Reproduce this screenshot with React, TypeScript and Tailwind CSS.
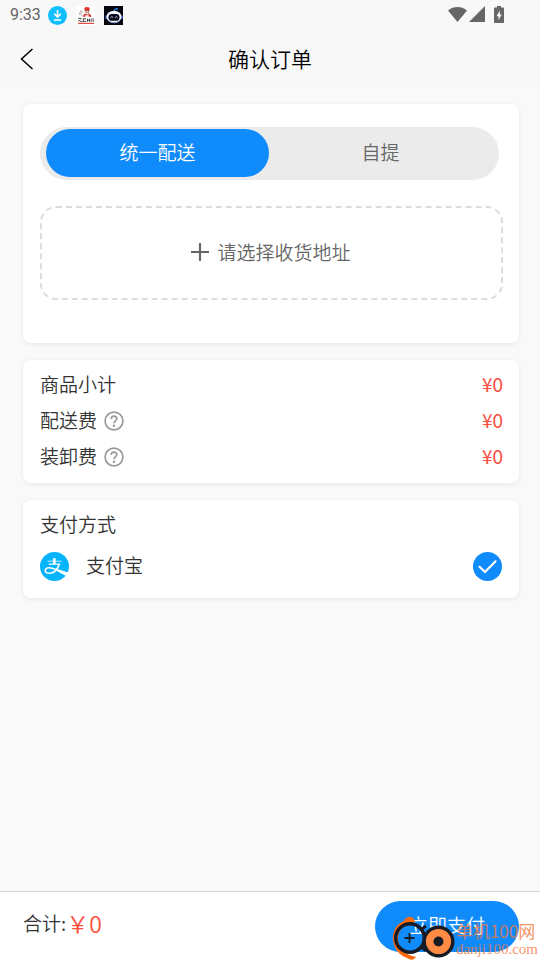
import React, { useState } from 'react';

const fees = [
  { label: '商品小计', amount: 0, help: false },
  { label: '配送费', amount: 0, help: true },
  { label: '装卸费', amount: 0, help: true },
];

const StatusBar: React.FC = () => (
  <div className="flex h-[30px] items-center justify-between pl-[10px] pr-[34px]">
    <div className="flex items-center">
      <span className="w-[38px] font-['Roboto',sans-serif] text-base leading-5 font-normal text-[#666]">9:33</span>
      {/* Download */}
      <svg className="h-[19px] w-[19px]" viewBox="0 0 19 19" fill="none">
        <circle cx="9.5" cy="9.5" r="9.5" fill="#10bfff" />
        <path d="M9.5 4v7M6.2 7.800l3.300 3.300 3.300-3.300M6 14h7" stroke="#fff" strokeWidth="1.6" />
      </svg>
      {/* Chef app */}
      <svg className="ml-[9px] h-[19px] w-[19px]" viewBox="0 0 19 19">
        <path d="M0 0h19v19H0z" fill="#fff" />
        <path d="M8.3 3.2c0-2 2.200-2.600 3.200-1.800 1.600-.4 2.700.7 2 2l-.6 1.200H9z" fill="#e22f26" />
        <path d="M8.800 4.500h4.600v3.200c-1 1.500-3.600 1.500-4.600 0z" fill="#f0c8ba" />
        <path d="M8.500 4.600h5" stroke="#a33" strokeWidth=".8" />
        <path d="M9.500 6.100h1M12 6.100h1" stroke="#444" strokeWidth=".8" />
        <path d="M7.500 8.800l2-1 1.700 1 1.800-1 2 1.200.3 1.800H6.800z" fill="#d9332c" />
        <path d="M4.200 5.500l1.600-1 .6 1.300-1.800 2.700 2 1.500M4.500 5l-1.300 4" stroke="#a08a85" strokeWidth=".7" fill="none" />
        <path d="M9.200 9.200h3.600v2H9.200z" fill="#fbeae6" />
        <path d="M2 13l1.800-.8 1.700.6M2.500 15.500l2-1.800M4 15.600h2.500M7 12.800h3M7 15.400h3M7.300 13v2.300M11.500 15.800v-3M13.500 12.800v3M11.500 14.200h2M15.200 15.800v-3.200M17.200 12.300v3.500" stroke="#333" strokeWidth=".9" fill="none" />
        <path d="M2 16.800h16v1.200H2z" fill="#e34a42" />
      </svg>
      {/* Robot app */}
      <svg className="ml-[9px] h-[19px] w-[19px]" viewBox="0 0 19 19" fill="none">
        <path d="M0 0h19v19H0z" fill="#05060d" />
        <path d="M10.400 5.200c-.1-1.600.6-2.300 2.300-2.400" stroke="#1687e8" strokeWidth="1.300" />
        <circle cx="13" cy="2.700" r="1" fill="#1687e8" />
        <path d="M2 9.500v3.500M18 9.500v3.500" stroke="#2459cf" strokeWidth="1.600" />
        <ellipse cx="10" cy="10.700" rx="7.600" ry="6" fill="#f4f7ff" />
        <path d="M4.500 15c3 2.300 8 2.300 11 0" stroke="#7e9be6" />
        <rect x="4.500" y="8" width="11" height="6.800" rx="3.400" fill="#080a18" />
        <path d="M6.900 12.200v-1.100c.3-1 1.500-1 1.800 0v1.100M11.400 12.200v-1.100c.3-1 1.500-1 1.800 0v1.100" stroke="#aab8d8" strokeWidth=".8" />
      </svg>
    </div>
    <svg className="h-[18px] w-[58px]" viewBox="0 0 58 18" fill="#666">
      <path d="M0 4.400C5.500-.2 13.500-.2 19 4.400L9.500 16z" />
      <path d="M37 0v16H21z" />
      <path d="M49 0h4v1.600h2.200c.5 0 .8.3.8.8v13.800c0 .5-.3.8-.8.8h-8.400c-.5 0-.8-.3-.8-.8V2.400c0-.5.3-.8.8-.8H49z" />
      <path d="M51.800 4.500L48.500 10.300h2v3.700l3.300-5.400h-2z" fill="#f8f8f8" />
    </svg>
  </div>
);

const HelpIcon: React.FC = () => (
  <svg className="h-5 w-5" viewBox="0 0 20 20" fill="none" stroke="#999">
    <circle cx="10" cy="10" r="8.900" strokeWidth="1.700" />
    <path d="M7.200 8c0-3.800 5.600-3.700 5.600-.4 0 2-2.700 2.300-2.700 4.600" strokeWidth="1.700" />
    <circle cx="10" cy="14.800" r="1.200" fill="#999" stroke="none" />
  </svg>
);

const AlipayIcon: React.FC = () => (
  <svg className="h-[29px] w-[29px]" viewBox="0 0 29 29" fill="none">
    <circle cx="14.500" cy="14.500" r="14.500" fill="#06b4fd" />
    <path d="M13 6.200h2.600V12H13z" fill="#fff" />
    <path d="M7.600 9.200h13.800" stroke="#fff" strokeOpacity=".75" />
    <path d="M8.700 12.200h11.500" stroke="#fff" strokeWidth="1.200" />
    <path
      d="M19.300 12.300c-1.500 4-4.300 9-9.600 9-5.800 0-5.800-5.600-.7-5.600 4.800 0 10 3.300 18.500 6"
      stroke="#fff"
      strokeWidth="1.600"
    />
    <path d="M17 17c3.500 1.300 7 2.500 11.300 3.300l-1.600 4c-3.700-1.600-7.300-3.600-10.800-5.700z" fill="#fff" />
  </svg>
);

const Watermark: React.FC = () => (
  <div className="pointer-events-none absolute right-[2px] bottom-0 flex items-end gap-px">
    <svg className="h-[43px] w-[64px]" viewBox="0 0 64 43" fill="none">
      <path d="M21 2C8 3 1 12 2 23c1 10 8 17 17 19l6-2c-10-2-18-8-18-18C7 13 13 7 21 5z" fill="#ff6a0a" />
      <path d="M13 3c4-5 10-4 11 2l-8 1zM16 40c3 4 7 3 9 0z" fill="#ff6a0a" />
      <circle cx="19" cy="21" r="14.300" stroke="#181b24" strokeWidth="3.500" />
      <path d="M31 12l4-3M30 30l4 3h4" stroke="#181b24" strokeWidth="3" />
      <path d="M18.500 16v10M13.500 21h10" stroke="#181b24" strokeWidth="1.800" />
      <circle cx="47.500" cy="24.500" r="14.300" fill="#ff8b45" stroke="#181b24" strokeWidth="3.400" />
      <circle cx="47.500" cy="24.500" r="5" fill="#181b24" />
    </svg>
    <div className="flex flex-col pb-[3px] whitespace-nowrap text-[#f2783c]/80">
      <span className="text-[17px] leading-5 font-normal">单机100网</span>
      <span className="font-['Liberation_Serif',serif] text-[15px] leading-4">danji100.com</span>
    </div>
  </div>
);

const App: React.FC = () => {
  const [mode, setMode] = useState<'delivery' | 'pickup'>('delivery');

  const tabClass = (active: boolean) =>
    `h-12 flex-1 rounded-full pb-[2px] text-[19px] leading-7 ${active ? 'bg-[#108bfb] text-white' : 'text-[#666]'}`;

  return (
    <div className="flex min-h-screen flex-col bg-[#f9f9f9] font-['Noto_Sans_CJK_SC',sans-serif] text-[19px] leading-7 font-[350] text-[#333]">
      <header className="bg-[#f8f8f8]">
        <StatusBar />
        <div className="grid h-[58px] grid-cols-[1fr_auto_1fr] items-center px-5">
          <button type="button" aria-label="返回" className="w-5">
            <svg className="h-[22px] w-[14px]" viewBox="0 0 14 22" fill="none" stroke="#000" strokeWidth="1.500">
              <path d="M12.500 1L1.500 11l11 10" />
            </svg>
          </button>
          <h1 className="pb-[2px] text-[21px] leading-8 font-[350] text-black">确认订单</h1>
        </div>
      </header>

      <main className="flex flex-1 flex-col gap-[17px] pt-4 pr-[21px] pl-[23px]">
        <section className="rounded-lg bg-white pt-[23px] pr-4 pb-[43px] pl-[17px] shadow-[0_1px_5px_rgba(0,0,0,0.08)]">
          <div className="mr-1 flex h-[53px] items-start rounded-full bg-[#ebebeb] pt-[2px] pr-[7px] pl-[6px]">
            <button type="button" aria-pressed={mode === 'delivery'} className={tabClass(mode === 'delivery')} onClick={() => setMode('delivery')}>
              统一配送
            </button>
            <button type="button" aria-pressed={mode === 'pickup'} className={tabClass(mode === 'pickup')} onClick={() => setMode('pickup')}>
              自提
            </button>
          </div>
          <button
            type="button"
            className="mt-[26px] flex h-[94px] w-full items-center justify-center gap-[7px] rounded-2xl border-2 border-dashed border-[#ddd] pr-[2px] pb-[2px] text-[#666]"
          >
            <svg className="h-5 w-5" viewBox="0 0 20 20" stroke="#666" strokeWidth="2.200">
              <path d="M10 1v18M1 10h18" />
            </svg>
            请选择收货地址
          </button>
        </section>

        <section className="rounded-lg bg-white pt-[7px] pr-4 pb-2 pl-[17px] shadow-[0_1px_5px_rgba(0,0,0,0.08)]">
          {fees.map((fee) => (
            <div key={fee.label} className="flex h-9 items-center justify-between">
              <span className="flex items-center gap-[7px]">
                <span className="pb-[2px]">{fee.label}</span>
                {fee.help && (
                  <button type="button" aria-label={`${fee.label}说明`}>
                    <HelpIcon />
                  </button>
                )}
              </span>
              <span className="pb-[2px] font-normal text-[#fc4d3d]">¥{fee.amount}</span>
            </div>
          ))}
        </section>

        <section className="rounded-lg bg-white pt-[7px] pr-[17px] pb-[9px] pl-[17px] shadow-[0_1px_5px_rgba(0,0,0,0.08)]">
          <h2 className="pb-[2px] leading-[34px] font-[350]">支付方式</h2>
          <label className="flex h-[46px] items-center">
            <AlipayIcon />
            <span className="ml-[17px] flex-1 pb-[2px]">支付宝</span>
            <span className="grid">
              <input
                type="radio"
                name="payment"
                defaultChecked
                className="col-start-1 row-start-1 h-[29px] w-[29px] appearance-none rounded-full border border-[#ccc] checked:border-0 checked:bg-[#108bfb]"
              />
              <svg className="pointer-events-none col-start-1 row-start-1 h-[29px] w-[29px]" viewBox="0 0 29 29" fill="none">
                <path d="M6.500 14.800l5.500 5.200L22.500 9.300" stroke="#fff" strokeWidth="2.200" strokeLinecap="round" />
              </svg>
            </span>
          </label>
        </section>
      </main>

      <footer className="relative flex h-[69px] items-center justify-between border-t border-[#d5d5d5] bg-white pr-[21px] pl-[23px]">
        <p className="flex items-center pb-[6px]">
          合计:
          <span className="text-[23px] leading-7 text-[#fc4d3d]">￥0</span>
        </p>
        <button type="button" className="h-[51px] w-36 rounded-full bg-[#108bfb] pb-[2px] text-white">
          立即支付
        </button>
        <Watermark />
      </footer>
    </div>
  );
};

export default App;
